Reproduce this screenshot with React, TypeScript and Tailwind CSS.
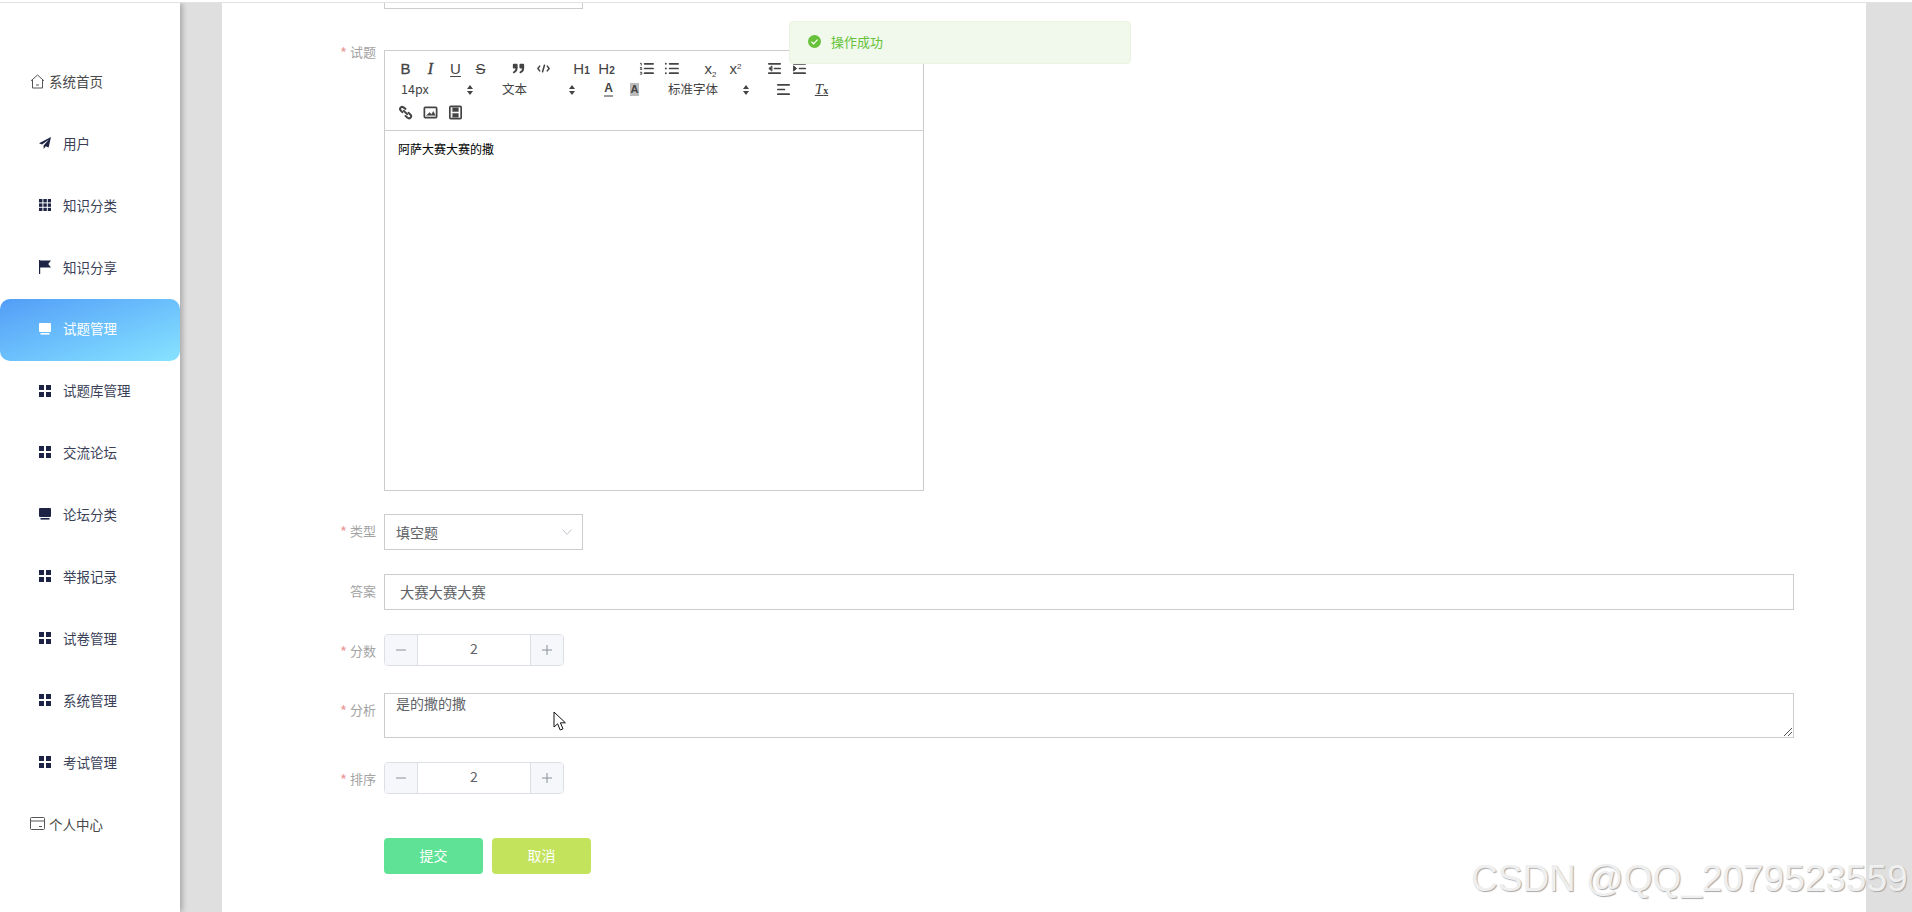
import type { ReactNode } from "react";

const Home = () => (
  <svg width="15" height="15" viewBox="0 0 15 15" fill="none" stroke="#555" strokeWidth="1">
    <path d="M1 6.800 7.500 1 14 6.800M2.500 5.800V14h10V5.800" />
    <path d="M6 11h3" />
  </svg>
);
const Card = () => (
  <svg width="15" height="13" viewBox="0 0 15 13" fill="none" stroke="#555" strokeWidth="1">
    <rect x="0.5" y="0.5" width="14" height="12" rx="1" />
    <path d="M.5 4h14M9 9.500h3" />
  </svg>
);
const Send = () => (
  <svg width="12" height="12" viewBox="0 0 12 12" fill="#1d2345">
    <path d="M12 0 0 6.200l3 1.300L10 2.500 4.600 8.400V12l2.200-2.700 2.800 1.200z" />
  </svg>
);
const Grid3 = () => (
  <svg width="12" height="12" viewBox="0 0 12 12" fill="#1d2345">
    {[0, 4.4, 8.8].map((y) =>
      [0, 4.4, 8.8].map((x) => <rect key={`${x}-${y}`} x={x} y={y} width="3.4" height="3.4" />),
    )}
  </svg>
);
const Grid2 = () => (
  <svg width="12" height="12" viewBox="0 0 12 12" fill="#1d2345">
    <rect width="5" height="5" />
    <rect x="7" width="5" height="5" />
    <rect y="7" width="5" height="5" />
    <rect x="7" y="7" width="5" height="5" />
  </svg>
);
const Flag = () => (
  <svg width="12" height="14" viewBox="0 0 12 14" fill="#1d2345">
    <path d="M0 0h1.200v14H0zM1 .5h11L9.200 4 12 7.500H1z" />
  </svg>
);
const Monitor = ({ color }: { color: string }) => (
  <svg width="12" height="12" viewBox="0 0 12 12" fill={color}>
    <rect width="12" height="9" rx="1" />
    <path d="M1.500 10h9v1.600h-9z" />
  </svg>
);

const navItems = [
  { label: "用户", icon: <Send /> },
  { label: "知识分类", icon: <Grid3 /> },
  { label: "知识分享", icon: <Flag /> },
  { label: "试题管理", icon: <Monitor color="#fff" />, active: true },
  { label: "试题库管理", icon: <Grid2 /> },
  { label: "交流论坛", icon: <Grid2 /> },
  { label: "论坛分类", icon: <Monitor color="#1d2345" /> },
  { label: "举报记录", icon: <Grid2 /> },
  { label: "试卷管理", icon: <Grid2 /> },
  { label: "系统管理", icon: <Grid2 /> },
  { label: "考试管理", icon: <Grid2 /> },
];

const Sidebar = () => (
  <aside className="relative z-10 w-[180px] shrink-0 bg-white pt-[48px] text-[13.5px] shadow-[2px_0_6px_rgba(0,0,0,0.28)]">
    <div className="flex h-[62px] items-center gap-[4px] pb-[2px] pl-[30px] text-[#4a4a4a]">
      <Home />
      <span>系统首页</span>
    </div>
    {navItems.map((item) => (
      <div
        key={item.label}
        className={
          item.active
            ? "flex h-[61.900px] items-center gap-[12px] rounded-[10px] bg-gradient-to-br from-[#539df7] to-[#87e3ff] pb-[2px] pl-[39px] text-white"
            : "flex h-[61.900px] items-center gap-[12px] pb-[2px] pl-[39px] text-[#3a3f58]"
        }
      >
        <span className="flex w-[12px] justify-center">{item.icon}</span>
        <span>{item.label}</span>
      </div>
    ))}
    <div className="flex h-[62px] items-center gap-[4px] pb-[2px] pl-[30px] text-[#4a4a4a]">
      <Card />
      <span>个人中心</span>
    </div>
  </aside>
);

const Btn = ({ children, className = "" }: { children: ReactNode; className?: string }) => (
  <span className={`flex h-[23px] w-[25px] items-center justify-center text-[#444] ${className}`}>{children}</span>
);

const Svg = ({ children }: { children: ReactNode }) => (
  <svg width="17" height="17" viewBox="0 0 18 18" fill="none" stroke="#444" strokeWidth="2" strokeLinecap="round" strokeLinejoin="round">
    {children}
  </svg>
);

const Picker = ({ label, width }: { label: string; width: string }) => (
  <span className={`flex h-[21px] items-center justify-between pl-[8px] pr-[8px] text-[12.5px] text-[#444] ${width}`}>
    <span>{label}</span>
    <svg width="6" height="10" viewBox="0 0 6 10" fill="#444">
      <path d="M3 0 6 4H0zM3 10 0 6h6z" />
    </svg>
  </span>
);

const ListLines = () => <path d="M7 4h9M7 9h9M7 14h9" strokeWidth="1.8" />;

const Toolbar = () => (
  <div className="flex h-[80px] flex-col border-b border-[#ccc] pl-[8px] pt-[6px]">
    <div className="flex h-[23px] items-center">
      <div className="mr-[13px] flex">
        <Btn><span className="font-['Liberation_Sans',sans-serif] text-[15px] leading-none [-webkit-text-stroke:0.3px_#444]">B</span></Btn>
        <Btn><span className="font-['Liberation_Serif',serif] text-[16px] italic leading-none [-webkit-text-stroke:0.4px_#444]">I</span></Btn>
        <Btn><span className="font-['Liberation_Sans',sans-serif] text-[15px] leading-none underline underline-offset-2">U</span></Btn>
        <Btn><span className="font-['Liberation_Sans',sans-serif] text-[15px] leading-none line-through">S</span></Btn>
      </div>
      <div className="mr-[13px] flex">
        <Btn>
          <Svg>
            <rect x="4" y="5" width="3" height="3" fill="#444" />
            <rect x="11" y="5" width="3" height="3" fill="#444" />
            <path d="M7 8c0 4-3 5-3 5M14 8c0 4-3 5-3 5" />
          </Svg>
        </Btn>
        <Btn>
          <Svg>
            <path d="M5 6.500 3 9l2 2.500M13 6.500 15 9l-2 2.500M10 5.500l-2 7" strokeWidth="1.600" />
          </Svg>
        </Btn>
      </div>
      <div className="mr-[15px] flex font-['Liberation_Sans',sans-serif]">
        <Btn><span className="text-[15px] leading-none">H<span className="text-[10px] font-bold">1</span></span></Btn>
        <Btn><span className="text-[15px] leading-none">H<span className="text-[10px] font-bold">2</span></span></Btn>
      </div>
      <div className="mr-[14px] flex">
        <Btn>
          <Svg>
            <ListLines />
            <path d="M2.500 3.500h1v2M2.500 8h1.500l-1.500 2h1.500M2.500 13h1.500v2h-1.500" strokeWidth="1" />
          </Svg>
        </Btn>
        <Btn>
          <Svg>
            <ListLines />
            <path d="M3 4h.01M3 9h.01M3 14h.01" />
          </Svg>
        </Btn>
      </div>
      <div className="mr-[14px] flex font-['Liberation_Sans',sans-serif]">
        <Btn><span className="text-[15px] font-medium leading-none">x<span className="relative top-[3px] text-[8px]">2</span></span></Btn>
        <Btn><span className="text-[15px] font-medium leading-none">x<span className="relative -top-[5px] text-[8px]">2</span></span></Btn>
      </div>
      <div className="flex">
        <Btn>
          <Svg>
            <path d="M3 4h12M9 9h6M3 14h12" strokeWidth="1.800" />
            <path d="M6 6.500 3 9l3 2.500z" fill="#444" strokeWidth="1" />
          </Svg>
        </Btn>
        <Btn>
          <Svg>
            <path d="M3 4h12M9 9h6M3 14h12" strokeWidth="1.800" />
            <path d="M3 6.500 6 9l-3 2.500z" fill="#444" strokeWidth="1" />
          </Svg>
        </Btn>
      </div>
    </div>
    <div className="flex h-[19px] items-center">
      <div className="mr-[13px] flex">
        <Picker label="14px" width="w-[88px]" />
      </div>
      <div className="mr-[13px] flex">
        <Picker label="文本" width="w-[89px]" />
      </div>
      <div className="mr-[13px] flex font-['Liberation_Sans',sans-serif]">
        <Btn><span className="border-b-2 border-[#999] text-[12px] font-bold leading-[13px]">A</span></Btn>
        <Btn className="ml-[1px]"><span className="bg-[#bbb] px-[1px] text-[11px] font-bold leading-[13px]">A</span></Btn>
      </div>
      <div className="mr-[14px] flex">
        <Picker label="标准字体" width="w-[97px]" />
      </div>
      <div className="mr-[13px] flex">
        <Btn>
          <Svg>
            <path d="M3 4h12M3 9h7M3 14h12" strokeWidth="1.800" />
          </Svg>
        </Btn>
      </div>
      <div className="flex">
        <Btn><span className="font-['Liberation_Serif',serif] text-[15px] italic leading-none underline">T<span className="text-[10px] font-bold not-italic">x</span></span></Btn>
      </div>
    </div>
    <div className="mt-[2px] flex h-[23px] items-center">
      <Btn>
        <svg width="15" height="15" viewBox="0 0 18 18" fill="none" stroke="#444" strokeWidth="2.400" strokeLinecap="round" strokeLinejoin="round">
          <path d="M7 7 11 11" />
          <path d="M8.900 4.600 6.600 2.900A2.500 2.500 0 0 0 3 6.300l2.200 2.300M12.800 9.400l2.200 2.300a2.500 2.500 0 0 1-3.600 3.500l-2.300-2" />
        </svg>
      </Btn>
      <Btn>
        <Svg>
          <rect x="2.500" y="3.500" width="13" height="11" rx="1" strokeWidth="1.800" />
          <path d="M5 12l3-3 2 2 2-3 2 4z" fill="#444" strokeWidth="0.5" />
        </Svg>
      </Btn>
      <Btn>
        <Svg>
          <rect x="3" y="2.500" width="12" height="13" rx="1" strokeWidth="1.800" fill="#fff" />
          <path d="M6 4h6v4H6zM6 10h6v4H6z" fill="#444" strokeWidth="0.5" />
        </Svg>
      </Btn>
    </div>
  </div>
);

const Label = ({ text, required = true, className = "" }: { text: string; required?: boolean; className?: string }) => (
  <div className={`w-[162px] shrink-0 pr-[8px] text-right text-[13px] leading-[34px] text-[#a3a3a3] ${className}`}>
    {required && <span className="mr-[3px] align-[-2px] text-[15px] text-[#ea9a9a]">*</span>}
    {text}
  </div>
);

const NumberInput = ({ value }: { value: string }) => (
  <div className="flex h-[32px] w-[180px] overflow-hidden rounded-[4px] border border-[#dcdfe6] text-[14px] text-[#606266]">
    <span className="flex w-[33px] items-center justify-center border-r border-[#dcdfe6] bg-[#f5f7fa] text-[#8a8f99]">
      <svg width="12" height="12" viewBox="0 0 12 12" stroke="currentColor" strokeWidth="1">
        <path d="M1 6h10" />
      </svg>
    </span>
    <span className="flex flex-1 items-center justify-center pb-[3px]">{value}</span>
    <span className="flex w-[33px] items-center justify-center border-l border-[#dcdfe6] bg-[#f5f7fa] text-[#8a8f99]">
      <svg width="12" height="12" viewBox="0 0 12 12" stroke="currentColor" strokeWidth="1">
        <path d="M1 6h10M6 1v10" />
      </svg>
    </span>
  </div>
);

const Form = () => (
  <div className="-mt-[30px]">
    <div className="flex">
      <div className="w-[162px] shrink-0" />
      <div className="h-[36px] w-[199px] border border-[#ccc]" />
    </div>

    <div className="mt-[41px] flex">
      <Label text="试题" className="-mt-[15px] h-[34px]" />
      <div className="h-[441px] w-[540px] border border-[#ccc]">
        <Toolbar />
        <div className="px-[13px] pt-[8px] text-[12px] leading-[20px] text-black">阿萨大赛大赛的撒</div>
      </div>
    </div>

    <div className="mt-[23px] flex">
      <Label text="类型" />
      <div className="flex h-[36px] w-[199px] items-center justify-between border border-[#ccc] pl-[11px] pr-[10px] text-[14px] text-[#606266]">
        <span>填空题</span>
        <svg width="10" height="6" viewBox="0 0 10 6" fill="none" stroke="#c0c4cc" strokeWidth="1">
          <path d="M.5.5 5 5.500 9.500.5" />
        </svg>
      </div>
    </div>

    <div className="mt-[24px] flex">
      <Label text="答案" required={false} />
      <div className="flex h-[36px] w-[1410px] items-center border border-[#ccc] pb-[1px] pl-[15px] text-[14.300px] text-[#606266]">
        大赛大赛大赛
      </div>
    </div>

    <div className="mt-[24px] flex h-[32px]">
      <Label text="分数" />
      <NumberInput value="2" />
    </div>

    <div className="mt-[27px] flex h-[45px]">
      <Label text="分析" />
      <div className="relative h-[45px] w-[1410px] border border-[#ccc] pl-[11px] text-[14px] leading-[18px] text-[#606266]">
        是的撒的撒
        <svg className="absolute bottom-0 right-0" width="10" height="10" viewBox="0 0 10 10" stroke="#555" strokeWidth="1">
          <path d="M1 9 9 1M5 9l4-4" />
        </svg>
      </div>
    </div>

    <div className="mt-[24px] flex h-[32px]">
      <Label text="排序" />
      <NumberInput value="2" />
    </div>

    <div className="ml-[162px] mt-[44px] flex gap-[9px]">
      <div className="flex h-[36px] w-[99px] items-center justify-center rounded-[4px] bg-[#60e296] pb-[1px] text-[14px] text-white">提交</div>
      <div className="flex h-[36px] w-[99px] items-center justify-center rounded-[4px] bg-[#c3e35d] pb-[1px] text-[14px] text-white">取消</div>
    </div>
  </div>
);

export default function App() {
  return (
    <div className="relative flex h-[912px] w-[1912px] flex-col overflow-hidden bg-[#dfdfdf] font-['Noto_Sans_CJK_SC','Liberation_Sans',sans-serif]">
      <div className="relative z-20 h-[3px] shrink-0 border-b border-[#e2e2e2] bg-white" />
      <div className="flex min-h-0 flex-1">
        <Sidebar />
        <main className="ml-[42px] w-[1644px] overflow-hidden bg-white">
          <Form />
        </main>
      </div>

      {/* toast */}
      <div className="absolute left-[789px] top-[21px] z-30 flex h-[43px] w-[342px] items-center gap-[10px] rounded-[4px] border border-[#e9f5e0] bg-[#f0f9eb] pb-[2px] pl-[18px] text-[13px] text-[#67c23a]">
        <svg width="13" height="13" viewBox="0 0 13 13">
          <circle cx="6.500" cy="6.500" r="6.500" fill="#67c23a" />
          <path d="M3.500 6.800 5.600 8.800 9.500 4.600" fill="none" stroke="#fff" strokeWidth="1.200" />
        </svg>
        <span>操作成功</span>
      </div>

      {/* mouse cursor */}
      <svg className="absolute left-[553px] top-[711px] z-30" width="14" height="21" viewBox="0 0 14 21">
        <path d="M1 1v15l3.600-3.200L7.200 19l2.800-1.200-2.600-6h5z" fill="#fff" stroke="#111" strokeWidth="1" />
      </svg>

      {/* watermark */}
      <div className="absolute left-[1471px] top-[857px] z-30 whitespace-nowrap font-['Liberation_Sans',sans-serif] text-[37px] leading-[44px] text-[#efefef] [text-shadow:1px_1px_1px_#a8a8a8]">
        CSDN @QQ_2079523559
      </div>
    </div>
  );
}
